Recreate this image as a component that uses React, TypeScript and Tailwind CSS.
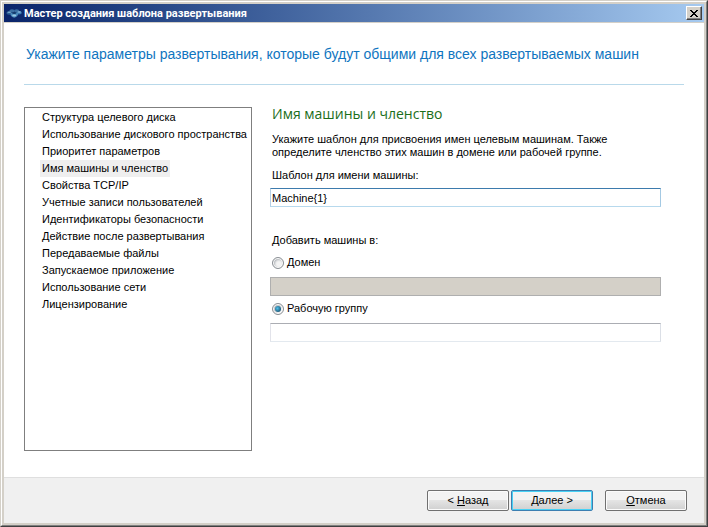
import { useState } from 'react';

const steps = [
  'Структура целевого диска',
  'Использование дискового пространства',
  'Приоритет параметров',
  'Имя машины и членство',
  'Свойства TCP/IP',
  'Учетные записи пользователей',
  'Идентификаторы безопасности',
  'Действие после развертывания',
  'Передаваемые файлы',
  'Запускаемое приложение',
  'Использование сети',
  'Лицензирование',
];

const fieldClass = 'block h-[19px] w-full border px-px text-[11px] text-black outline-none';
const radioClass =
  "grid size-3 shrink-0 appearance-none place-items-center rounded-full border border-[#8a8f94] bg-[#f4f4f4] shadow-[inset_0_0_0_1px_#ffffff,inset_1px_1px_2px_1px_#b4b8bc] checked:before:size-[6px] checked:before:rounded-full checked:before:bg-radial-[at_40%_40%] checked:before:from-[#4fc0ea] checked:before:to-[#0b3450] checked:before:content-['']";
const buttonClass =
  'h-[21px] w-[82px] rounded-[2px] border bg-linear-to-b from-[#f3f3f3] from-50% via-[#e4e4e4] via-50% to-[#d0d0d0] text-[11px] leading-none text-black';

function AppIcon() {
  return (
    <svg className="h-4 w-4" viewBox="0 0 16 16" aria-hidden="true">
      <ellipse cx="3.2" cy="8" rx="2.8" ry="1.8" fill="#2c6094" />
      <ellipse cx="13" cy="7.8" rx="2.8" ry="1.8" fill="#3a7ab0" />
      <ellipse cx="6" cy="5.8" rx="2.6" ry="1.5" fill="#3a6ea2" />
      <ellipse cx="10.6" cy="5.8" rx="2.6" ry="1.5" fill="#3a6ea2" />
      <path d="M4.5 8.5q3.8-2.5 7.5 0q0.5 2.8-3.8 4.2q-4.3-1.400-3.700-4.200z" fill="#4a8bbd" />
      <ellipse cx="8.2" cy="8" rx="2.2" ry="1" fill="#143a6c" />
      <ellipse cx="3.2" cy="7.2" rx="1.8" ry="0.7" fill="#7aa8cc" />
      <ellipse cx="13.2" cy="7" rx="1.8" ry="0.7" fill="#8cbade" />
      <ellipse cx="8.2" cy="10.4" rx="2" ry="1" fill="#9cc8e4" />
    </svg>
  );
}

export default function App() {
  const [target, setTarget] = useState('workgroup');
  const [active, setActive] = useState(3);
  return (
    <div className="border border-t-[#d4d0c8] border-l-[#d4d0c8] border-r-[#404040] border-b-[#404040] font-['Liberation_Sans','DejaVu_Sans',sans-serif] text-[11px] leading-[13px] text-black">
      <div className="flex min-h-[calc(100vh-2px)] flex-col border border-t-white border-l-white border-r-[#808080] border-b-[#808080] bg-[#d4d0c8] p-[2px]">
        <header className="mb-px flex h-[18px] items-center gap-[2px] bg-linear-to-r from-[#0a246a] to-[#a6caf0] px-[2px] text-white">
          <AppIcon />
          <h1 className="flex-1 font-['Roboto','Liberation_Sans',sans-serif] font-bold">Мастер создания шаблона развертывания</h1>
          <button
            type="button"
            aria-label="Закрыть"
            className="grid h-[14px] w-4 place-items-center border border-t-white border-l-white border-r-[#404040] border-b-[#404040] bg-[#d4d0c8] shadow-[inset_-1px_-1px_0_#808080]"
          >
            <svg className="h-[7px] w-2" viewBox="0 0 8 7" shapeRendering="crispEdges" fill="#000" aria-hidden="true">
              <path d="M0 0h2v1h1v1h2V1h1V0h2v1H7v1H6v1H5v1h1v1h1v1h1v1H6V6H5V5H3v1H2v1H0V6h1V5h1V4h1V3H2V2H1V1H0z" />
            </svg>
          </button>
        </header>

        <main className="flex-1 bg-white px-5 pb-[25px]">
          <h2 className="border-b border-[#b9d9ea] pt-[21px] pb-5 pl-[2px] text-[14px] leading-5 text-[#0f75c0]">
            Укажите параметры развертывания, которые будут общими для всех развертываемых машин
          </h2>

          <div className="mt-[22px] flex gap-[18px]">
            <nav aria-label="Шаги" className="h-[344px] w-[228px] shrink-0 border border-[#7f7f7f] pt-px pl-[15px]">
              <ol>
                {steps.map((step, i) => (
                  <li key={step} className="h-[17px]">
                    <a
                      href="#step"
                      aria-current={i === active ? 'step' : undefined}
                      onClick={() => setActive(i)}
                      className={
                        i === active
                          ? 'inline-block bg-[#efefef] px-[2px] leading-[17px] whitespace-nowrap'
                          : 'inline-block px-[2px] leading-[17px] whitespace-nowrap'
                      }
                    >
                      {step}
                    </a>
                  </li>
                ))}
              </ol>
            </nav>

            <form className="mr-[23px] flex-1" onSubmit={(e) => e.preventDefault()}>
              <h3 className="pl-[2px] font-['Open_Sans','Liberation_Sans',sans-serif] text-[14px] leading-[14px] text-[#1a6e1a]">
                Имя машины и членство
              </h3>
              <p className="mt-3 max-w-[350px] pl-[2px]">
                Укажите шаблон для присвоения имен целевым машинам. Также определите членство этих машин в домене или рабочей группе.
              </p>
              <label htmlFor="template" className="mt-[10px] mb-[6px] block pl-[2px]">
                Шаблон для имени машины:
              </label>
              <input
                id="template"
                defaultValue="Machine{1}"
                className={fieldClass + ' border-t-[#3d7bad] border-r-[#a4c9e3] border-b-[#b7d9ed] border-l-[#b5cfe7]'}
              />
              <fieldset>
                <legend className="pt-[27px] pl-[2px]">Добавить машины в:</legend>
                <div className="mt-2 mb-[7px] flex h-[15px] items-center gap-[3px] pl-[2px]">
                  <input
                    id="domain"
                    type="radio"
                    name="target"
                    checked={target === 'domain'}
                    onChange={() => setTarget('domain')}
                    className={radioClass}
                  />
                  <label htmlFor="domain">Домен</label>
                </div>
                <input
                  aria-label="Имя домена"
                  disabled={target !== 'domain'}
                  className={fieldClass + ' border-[#afafaf] disabled:bg-[#d4d0c8]'}
                />
                <div className="mt-[5px] mb-[7px] flex h-[15px] items-center gap-[3px] pl-[2px]">
                  <input
                    id="workgroup"
                    type="radio"
                    name="target"
                    checked={target === 'workgroup'}
                    onChange={() => setTarget('workgroup')}
                    className={radioClass}
                  />
                  <label htmlFor="workgroup">Рабочую группу</label>
                </div>
                <input
                  aria-label="Имя рабочей группы"
                  disabled={target !== 'workgroup'}
                  className={fieldClass + ' border-t-[#abadb3] border-r-[#dbdfe6] border-b-[#e3e9ef] border-l-[#e2e3ea] disabled:bg-[#d4d0c8]'}
                />
              </fieldset>
            </form>
          </div>
        </main>

        <footer className="flex justify-end gap-[2px] border-t border-[#dfdfdf] bg-[#f0f0f0] pt-3 pr-[17px] pb-3">
          <button type="button" className={buttonClass + ' border-[#707070] shadow-[inset_0_0_0_1px_#fbfbfb]'}>
            &lt; <u>Н</u>азад
          </button>
          <button type="button" className={buttonClass + ' border-[#3c7fb1] shadow-[inset_0_0_0_1px_#48d1f5]'}>
            <u>Д</u>алее &gt;
          </button>
          <button type="button" className={buttonClass + ' ml-[10px] border-[#707070] shadow-[inset_0_0_0_1px_#fbfbfb]'}>
            <u>О</u>тмена
          </button>
        </footer>
      </div>
    </div>
  );
}
